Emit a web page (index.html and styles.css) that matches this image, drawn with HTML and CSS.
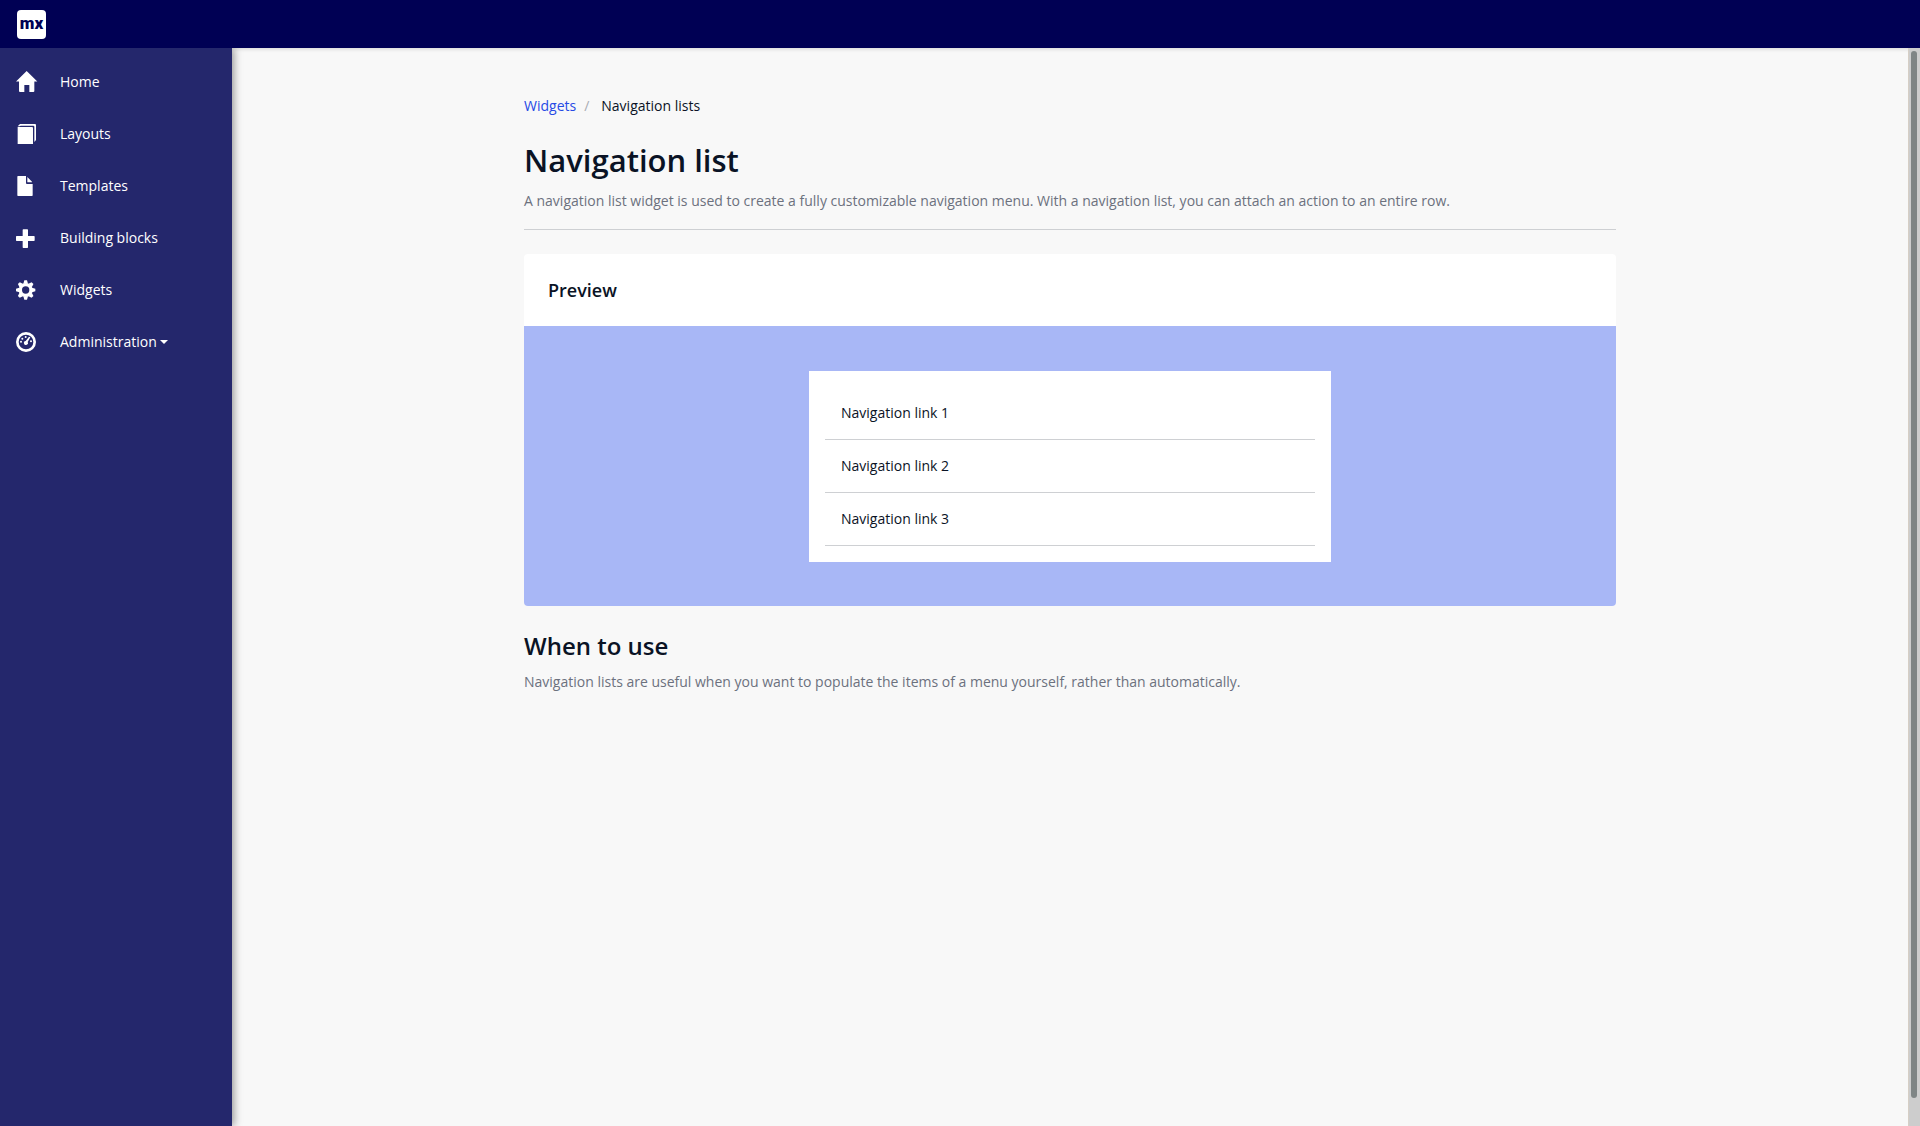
FILE: index.html
```html
<!DOCTYPE html>
<html lang="en">
<head>
<meta charset="utf-8">
<meta name="viewport" content="width=device-width, initial-scale=1">
<title>Navigation list</title>
<link rel="stylesheet" href="styles.css">
</head>
<body>
<header class="topbar">
  <a class="logo" href="#" aria-label="Mendix">mx</a>
</header>
<div class="shell">
  <nav class="sidebar" aria-label="Main">
    <a class="nav-item" href="#">
      <svg class="icon" viewBox="0 0 72 72" aria-hidden="true"><path d="M32 3 64 34.500H55V63q0 3-3 3H40V45H25V66H12q-3 0-3-3V34.500H0Z"/></svg>
      <span>Home</span>
    </a>
    <a class="nav-item" href="#">
      <svg class="icon" viewBox="0 0 72 72" aria-hidden="true"><path d="M5 15H48q3 0 3 3V66H5ZM5 13 12 6H57q3 0 3 3V54l-5 6V14q0-3-3-3H14L11 13Z"/></svg>
      <span>Layouts</span>
    </a>
    <a class="nav-item" href="#">
      <svg class="icon" viewBox="0 0 72 72" aria-hidden="true"><path d="M6 6H30V27q0 3 3 3H50V64q0 2-2 2H6q-2 0-2-2V8q0-2 2-2ZM34 9 48 23v2H34Z"/></svg>
      <span>Templates</span>
    </a>
    <a class="nav-item" href="#">
      <svg class="icon" viewBox="0 0 72 72" aria-hidden="true"><path d="M22 10H34q2 0 2 2V30H54q2 0 2 2V43q0 2-2 2H36V64q0 2-2 2H22q-2 0-2-2V45H2q-2 0-2-2V32q0-2 2-2H20V12q0-2 2-2Z"/></svg>
      <span>Building blocks</span>
    </a>
    <a class="nav-item" href="#">
      <svg class="icon" viewBox="0 0 72 72" aria-hidden="true"><g transform="translate(29 36)"><circle r="16" fill="none" stroke="currentColor" stroke-width="10"/><path d="M-7-19-4-29H4L7-19ZM-7 19-4 29H4L7 19ZM19-7 29-4V4L19 7ZM-19-7-29-4V4L-19 7Z"/><path transform="rotate(45)" d="M-7-19-4-29H4L7-19ZM-7 19-4 29H4L7 19ZM19-7 29-4V4L19 7ZM-19-7-29-4V4L-19 7Z"/></g></svg>
      <span>Widgets</span>
    </a>
    <a class="nav-item" href="#">
      <svg class="icon" viewBox="0 0 72 72" aria-hidden="true"><circle cx="30" cy="36" r="26" fill="none" stroke="currentColor" stroke-width="8"/><path d="M39 20 43 22 35 36a6 6 0 1 1-6-3Z"/><circle cx="15" cy="35" r="3"/><circle cx="19" cy="26" r="3"/><circle cx="29" cy="21" r="3"/><circle cx="45" cy="34" r="3"/></svg>
      <span>Administration</span><span class="caret"></span>
    </a>
  </nav>
  <main class="main">
    <div class="content">
      <nav class="breadcrumb" aria-label="Breadcrumb">
        <a href="#">Widgets</a><span class="separator">/</span><span>Navigation lists</span>
      </nav>
      <section class="intro">
        <h1>Navigation list</h1>
        <p>A navigation list widget is used to create a fully customizable navigation menu. With a navigation list, you can attach an action to an entire row.</p>
      </section>
      <section class="card">
        <h3 class="card-title">Preview</h3>
        <div class="preview">
          <ul class="nav-list">
            <li><a href="#">Navigation link 1</a></li>
            <li><a href="#">Navigation link 2</a></li>
            <li><a href="#">Navigation link 3</a></li>
          </ul>
        </div>
      </section>
      <section class="usage">
        <h2>When to use</h2>
        <p>Navigation lists are useful when you want to populate the items of a menu yourself, rather than automatically.</p>
      </section>
    </div>
  </main>
  <div class="scrollbar" aria-hidden="true"><div class="thumb"></div></div>
</div>
</body>
</html>
```
FILE: styles.css
```css
* { box-sizing: border-box; }

body {
  margin: 0;
  min-height: 100vh;
  display: flex;
  flex-direction: column;
  background: #f8f8f8;
  color: #0a1325;
  font: 14px/20px "Open Sans", sans-serif;
}

h1, h2, h3, p, ul { margin: 0; }
a { text-decoration: none; }

.topbar {
  height: 48px;
  padding: 0 17px;
  display: flex;
  align-items: center;
  background: #000054;
  box-shadow: 0 1px 4px rgba(0, 0, 0, 0.15);
}

.logo {
  width: 29px;
  height: 29px;
  border-radius: 4px;
  background: #fff;
  color: #000054;
  font: 900 17px/26px Roboto, sans-serif;
  text-align: center;
}

.shell {
  flex: 1;
  display: flex;
}

.sidebar {
  width: 232px;
  padding-top: 8px;
  background: #24276c;
  box-shadow: 2px 0 8px rgba(0, 0, 0, 0.4);
  clip-path: inset(0 -16px 0 0);
}

.nav-item {
  height: 52px;
  padding-left: 16px;
  display: flex;
  align-items: center;
  color: #fff;
}

.icon {
  width: 24px;
  height: 24px;
  margin-right: 20px;
  fill: currentColor;
}

.caret {
  margin-left: 3px;
  border: 4px solid transparent;
  border-top-color: currentColor;
  border-bottom: 0;
}

.main {
  flex: 1;
  padding: 48px 24px;
}

.content {
  max-width: 1092px;
  margin: 0 auto;
}

.breadcrumb {
  display: flex;
}
.breadcrumb a { color: #264ae5; }
.separator {
  margin: 0 12px 0 8px;
  color: #a9acb3;
}

.intro {
  margin-top: 24px;
  padding-bottom: 18px;
  border-bottom: 1px solid #ced0d3;
}

h1 {
  font-size: 31px;
  line-height: 41px;
  font-weight: 600;
}

h2 {
  font-size: 24px;
  line-height: 32px;
  font-weight: 600;
}

.intro p, .usage p {
  margin-top: 10px;
  color: #6c717e;
}

.card {
  margin: 24px 0;
  border-radius: 4px;
  overflow: hidden;
  background: #fff;
}

.card-title {
  padding: 24px;
  font-size: 18px;
  line-height: 24px;
  font-weight: 600;
}

.preview {
  min-height: 280px;
  display: flex;
  align-items: center;
  justify-content: center;
  background: #a8b7f6;
}

.nav-list {
  width: calc(50% - 24px);
  padding: 16px;
  background: #fff;
  list-style: none;
}
.nav-list a {
  display: block;
  padding: 16px;
  border-bottom: 1px solid #ced0d3;
  color: #0a1325;
}

.scrollbar {
  width: 12px;
  padding: 3px 3px 28px 2px;
  display: flex;
  border-left: 1px solid #d6cfc6;
  background: #cdcdcd;
}
.thumb {
  flex: 1;
  border-radius: 3px;
  background: #7f8585;
}
```
